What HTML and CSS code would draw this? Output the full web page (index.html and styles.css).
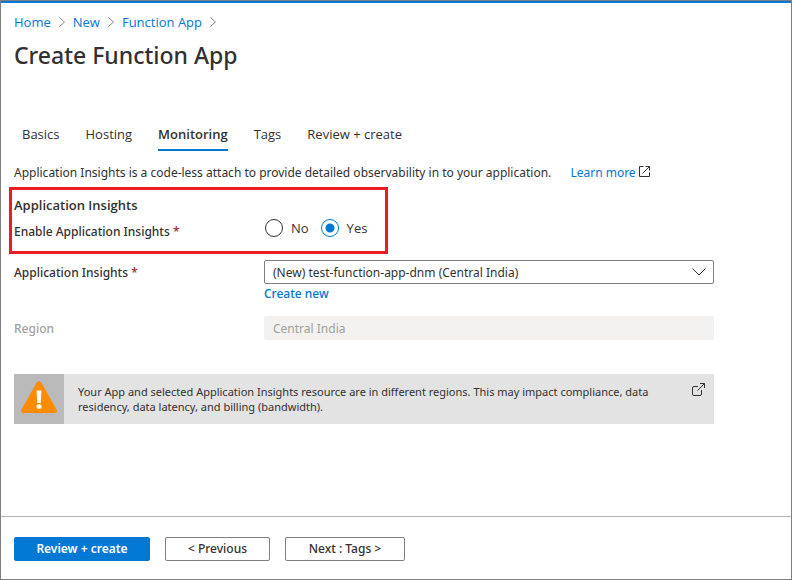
FILE: index.html
```html
<!DOCTYPE html>
<html lang="en">
<head>
<meta charset="utf-8">
<title>Create Function App</title>
<link rel="stylesheet" href="styles.css">
</head>
<body>
<div class="page">
  <header class="header">
    <nav class="breadcrumb" aria-label="Breadcrumb">
      <a href="#">Home</a>
      <svg class="crumb-arrow" viewBox="0 0 6 10" aria-hidden="true"><path d="M.5.5 5.5 5 .5 9.5"/></svg>
      <a href="#">New</a>
      <svg class="crumb-arrow" viewBox="0 0 6 10" aria-hidden="true"><path d="M.5.5 5.5 5 .5 9.5"/></svg>
      <a href="#">Function App</a>
      <svg class="crumb-arrow" viewBox="0 0 6 10" aria-hidden="true"><path d="M.5.5 5.5 5 .5 9.5"/></svg>
    </nav>
    <h1 class="title">Create Function App</h1>
  </header>

  <main class="content">
    <nav class="tabs" aria-label="Steps">
      <a class="tab" href="#">Basics</a>
      <a class="tab" href="#">Hosting</a>
      <a class="tab tab-active" href="#" aria-current="step">Monitoring</a>
      <a class="tab" href="#">Tags</a>
      <a class="tab" href="#">Review + create</a>
    </nav>

    <p class="intro">Application Insights is a code-less attach to provide detailed observability in to your application. <a class="learn-more" href="#">Learn more<svg class="link-icon" viewBox="0 0 11 11" aria-hidden="true"><path d="M4.5.5h-4v10h10v-4M6.5.5h4v4M10.5.5l-7 7"/></svg></a></p>

    <section class="highlight">
      <h2 class="section-title">Application Insights</h2>
      <div class="field field-enable" role="radiogroup" aria-labelledby="enable-label">
        <span class="label" id="enable-label">Enable Application Insights <span class="required">*</span></span>
        <div class="radios">
          <label class="radio"><input type="radio" name="enable">No</label>
          <label class="radio"><input type="radio" name="enable" checked>Yes</label>
        </div>
      </div>
    </section>

    <div class="field">
      <label class="label" for="insights">Application Insights <span class="required">*</span></label>
      <div class="select-box">
        <select class="control" id="insights">
          <option>(New) test-function-app-dnm (Central India)</option>
        </select>
        <svg class="chevron" viewBox="0 0 14 8" aria-hidden="true"><path d="M.5.5 7 7 13.5.5"/></svg>
      </div>
      <a class="create-new" href="#">Create new</a>
    </div>

    <div class="field field-region">
      <label class="label label-disabled" for="region">Region</label>
      <input class="control control-disabled" id="region" type="text" value="Central India" disabled>
    </div>

    <div class="alert" role="alert">
      <div class="alert-badge">
        <svg class="warning" viewBox="0 0 36 32" aria-hidden="true">
          <path class="warning-shape" d="M15.700 1.500Q18-1.500 20.300 1.500L35.500 28.500Q37 32 33.500 32H2.500Q-1 32 .5 28.500Z"/>
          <path class="warning-mark" d="M15.500 9.500h5l-.8 12.500h-3.400z"/>
          <circle class="warning-mark" cx="18" cy="25.500" r="2.500"/>
        </svg>
      </div>
      <p class="alert-text">Your App and selected Application Insights resource are in different regions. This may impact compliance, data residency, data latency, and billing (bandwidth).</p>
      <a class="alert-link" href="#" aria-label="Open details">
        <svg class="popout" viewBox="0 0 13 13" aria-hidden="true"><path d="M6 3.500H2Q.5 3.500.5 5v6Q.5 12.500 2 12.500h6Q9.500 12.500 9.500 11V7M8 .5h4.500V5M12.500.5 5.500 7.500"/></svg>
      </a>
    </div>
  </main>

  <footer class="footer">
    <button class="button button-primary" type="button">Review + create</button>
    <button class="button" type="button">&lt; Previous</button>
    <button class="button button-next" type="button">Next : Tags &gt;</button>
  </footer>
</div>
</body>
</html>
```

FILE: styles.css
```css
* {
  box-sizing: border-box;
}

body {
  margin: 0;
  font: 13px/18px "Open Sans", sans-serif;
  color: #323130;
  background: #fff;
}

a {
  color: #0078d4;
  text-decoration: none;
}

svg {
  fill: none;
  stroke: currentColor;
}

.page {
  display: flex;
  flex-direction: column;
  min-height: 100vh;
  border: 1px solid #808080;
  box-shadow: inset 0 2px #0078d4;
}

.header {
  padding: 12px 13px 0;
}

.breadcrumb {
  display: flex;
  align-items: center;
  gap: 8px;
}

.crumb-arrow {
  width: 6px;
  height: 10px;
  color: #8a8886;
}

.title {
  margin: 8px 0 0;
  font-family: "Noto Sans", sans-serif;
  font-size: 23px;
  line-height: 32px;
  font-weight: 500;
}

.content {
  flex: 1;
  padding: 52px 13px 24px;
}

.tabs {
  display: flex;
  gap: 26px;
  padding-left: 8px;
}

.tab {
  padding: 2px 0 6px;
  border-bottom: 2px solid transparent;
  color: #323130;
}

.tab-active {
  border-color: #0078d4;
  font-weight: 600;
}

.intro {
  margin: 13px 0 5px;
  font-family: "Noto Sans", sans-serif;
  font-size: 12px;
}

.learn-more {
  margin-left: 16px;
}

.link-icon {
  width: 11px;
  height: 11px;
  margin-left: 3px;
  color: #323130;
}

.highlight {
  width: 379px;
  max-width: 100%;
  margin: 0 0 6px -5px;
  padding: 6px 2px 10px;
  border: 3px solid #ed1c24;
}

.section-title {
  margin: 0 0 5px;
  font-size: 13px;
  line-height: 18px;
  font-weight: 600;
}

.field {
  display: grid;
  grid-template-columns: 250px minmax(0, 1fr);
  align-items: center;
  max-width: 700px;
}

.field-enable {
  align-items: start;
}

.label {
  padding-top: 2px;
  font-family: "Noto Sans", sans-serif;
  font-size: 12px;
  font-weight: 500;
}

.field-enable .label {
  padding-top: 4px;
}

.label-disabled {
  color: #a19f9d;
}

.required {
  color: #a4262c;
}

.radios {
  display: flex;
  gap: 12px;
  padding-left: 1px;
}

.radio {
  display: flex;
  align-items: center;
  gap: 8px;
}

.radio input {
  appearance: none;
  width: 18px;
  height: 18px;
  margin: 0;
  border: 1px solid #323130;
  border-radius: 50%;
}

.radio input:checked {
  border-color: #0078d4;
  background: radial-gradient(circle, #0078d4 4px, transparent 5px);
}

.select-box {
  display: grid;
  align-items: center;
}

.select-box > * {
  grid-area: 1 / 1;
}

.control {
  appearance: none;
  width: 100%;
  height: 24px;
  padding: 0 8px;
  border: 1px solid #808080;
  border-radius: 2px;
  background: #fff;
  color: #323130;
  font-family: "Noto Sans", sans-serif;
  font-size: 12px;
}

.control-disabled {
  border-color: #f3f2f1;
  background: #f3f2f1;
  color: #a19f9d;
}

.chevron {
  width: 14px;
  height: 8px;
  margin-right: 8px;
  justify-self: end;
  pointer-events: none;
}

.create-new {
  grid-column: 2;
  justify-self: start;
  padding-top: 1px;
  font-family: "Noto Sans", sans-serif;
  font-size: 12px;
  font-weight: 500;
}

.field-region {
  margin-top: 13px;
}

.alert {
  display: flex;
  max-width: 700px;
  margin-top: 34px;
  background: #e3e3e3;
}

.alert-badge {
  display: flex;
  flex: none;
  align-items: center;
  justify-content: center;
  width: 50px;
  min-height: 50px;
  background: #bababa;
}

.warning {
  width: 36px;
  height: 32px;
  margin-bottom: 4px;
  stroke: none;
}

.warning-shape {
  fill: #ff8c00;
}

.warning-mark {
  fill: #fff;
}

.alert-text {
  flex: 1;
  margin: 0;
  padding: 10px 14px;
  font-family: "Noto Sans", sans-serif;
  font-size: 11px;
  line-height: 15px;
}

.alert-link {
  padding: 9px 9px 0 0;
  color: #323130;
}

.popout {
  display: block;
  width: 13px;
  height: 13px;
}

.footer {
  display: flex;
  gap: 15px;
  padding: 20px 13px 18px;
  border-top: 1px solid #b3b3b3;
}

.button {
  height: 24px;
  min-width: 105px;
  padding: 0 12px 1px;
  border: 1px solid #808080;
  border-radius: 2px;
  background: #fff;
  color: #323130;
  font-family: "Noto Sans", sans-serif;
  font-size: 12px;
  font-weight: 500;
  line-height: 20px;
}

.button-next {
  min-width: 120px;
}

.button-primary {
  min-width: 136px;
  border-color: #0078d4;
  background: #0078d4;
  color: #fff;
  font-weight: 600;
}
```
